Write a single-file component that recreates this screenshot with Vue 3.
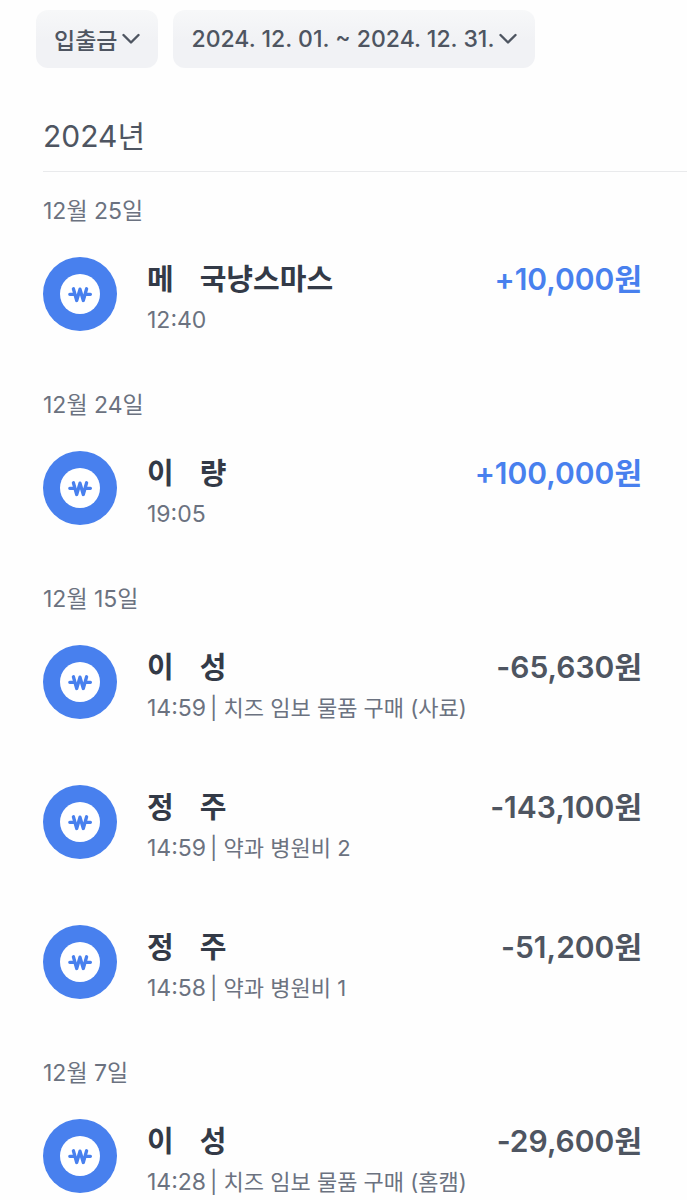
<script setup>
import { ref } from 'vue'

const filters = ref([
  { id: 'type', label: '입출금' },
  { id: 'period', label: '2024. 12. 01. ~ 2024. 12. 31.' }
])

const groups = ref([
  {
    date: '12월 25일',
    items: [{ name: ['메', '국냥스마스'], time: '12:40', amount: 10000 }]
  },
  {
    date: '12월 24일',
    items: [{ name: ['이', '량'], time: '19:05', amount: 100000 }]
  },
  {
    date: '12월 15일',
    items: [
      { name: ['이', '성'], time: '14:59', memo: '치즈 임보 물품 구매 (사료)', amount: -65630 },
      { name: ['정', '주'], time: '14:59', memo: '약과 병원비 2', amount: -143100 },
      { name: ['정', '주'], time: '14:58', memo: '약과 병원비 1', amount: -51200 }
    ]
  },
  {
    date: '12월 7일',
    items: [{ name: ['이', '성'], time: '14:28', memo: '치즈 임보 물품 구매 (홈캠)', amount: -29600 }]
  }
])

function won(amount) {
  const sign = amount > 0 ? '+' : '-'
  return sign + Math.abs(amount).toLocaleString('en-US') + '원'
}
</script>

<template>
  <main class="history">
    <div class="filters">
      <button v-for="filter in filters" :key="filter.id" type="button" class="filter">
        {{ filter.label }}
        <svg class="chevron" viewBox="0 0 18 12" aria-hidden="true">
          <path d="M1.5 2L9 9.5 16.5 2" />
        </svg>
      </button>
    </div>

    <h1 class="year">2024년</h1>

    <section v-for="group in groups" :key="group.date" class="group">
      <h2 class="date">{{ group.date }}</h2>
      <ul class="items">
        <li v-for="(item, i) in group.items" :key="i" class="item">
          <svg class="coin" viewBox="0 0 74 74" aria-hidden="true">
            <circle cx="37" cy="37" r="37" fill="#4880ee" />
            <circle cx="37" cy="37" r="20" fill="#fff" />
            <path class="won" d="M30.4 31.8l3.3 11.7L37 32.2l3.3 11.3 3.3-11.7M26.8 37.3h4.4M42.8 37.3h4.6" />
          </svg>
          <div class="info">
            <p class="name">
              <span v-for="part in item.name" :key="part">{{ part }}</span>
            </p>
            <p class="detail">
              <span>{{ item.time }}</span>
              <span v-if="item.memo" class="memo">| {{ item.memo }}</span>
            </p>
          </div>
          <strong class="amount" :class="{ deposit: item.amount > 0 }">{{ won(item.amount) }}</strong>
        </li>
      </ul>
    </section>
  </main>
</template>

<style>
body {
  margin: 0;
  background: #fefefe;
}
</style>

<style scoped>
.history {
  padding: 10px 0 0 43px;
  font-family: Inter, 'Noto Sans CJK KR', sans-serif;
  color: #6b7280;
  overflow: hidden;
}
.filters {
  display: flex;
  gap: 15px;
  margin-left: -7px;
}
.filter {
  display: flex;
  align-items: center;
  gap: 5px;
  height: 58px;
  padding: 0 18px;
  border: 0;
  border-radius: 12px;
  background: linear-gradient(#f7f8f9, #f1f2f5 50%);
  color: #4e5561;
  font: inherit;
  font-size: 23px;
  font-weight: 500;
  white-space: nowrap;
  cursor: pointer;
}
.chevron {
  width: 18px;
  height: 12px;
  fill: none;
  stroke: currentColor;
  stroke-width: 2.4;
  stroke-linecap: round;
  stroke-linejoin: round;
}
.year {
  margin: 44px 0 0;
  padding-bottom: 11px;
  border-bottom: 1px solid #e9eaec;
  color: #4e5561;
  font-size: 30px;
  font-weight: 400;
  line-height: 48px;
}
.group {
  padding-top: 22px;
}
.group + .group {
  padding-top: 47px;
}
.date {
  margin: 0;
  font-size: 23px;
  font-weight: 400;
  line-height: 34px;
}
.items {
  display: flex;
  flex-direction: column;
  gap: 56px;
  margin: 0;
  padding: 29px 45px 0 0;
  list-style: none;
}
.item {
  display: flex;
  align-items: flex-start;
  height: 84px;
}
.coin {
  flex: none;
  width: 74px;
  height: 74px;
  margin-right: 30px;
}
.won {
  fill: none;
  stroke: #4880ee;
  stroke-width: 3.3;
  stroke-linecap: round;
  stroke-linejoin: round;
}
.info {
  flex: 1;
  min-width: 0;
  padding-top: 3px;
}
.name {
  display: flex;
  gap: 26px;
  margin: 0;
  color: #333a47;
  font-size: 29px;
  font-weight: 600;
  line-height: 40px;
}
.detail {
  display: flex;
  align-items: baseline;
  gap: 4px;
  margin: 0;
  font-size: 23px;
  line-height: 40px;
  white-space: nowrap;
}
.memo {
  font-size: 22px;
}
.amount {
  color: #4e5561;
  font-size: 30px;
  font-weight: 600;
  line-height: 44px;
  white-space: nowrap;
}
.amount.deposit {
  color: #4880ee;
}
</style>
